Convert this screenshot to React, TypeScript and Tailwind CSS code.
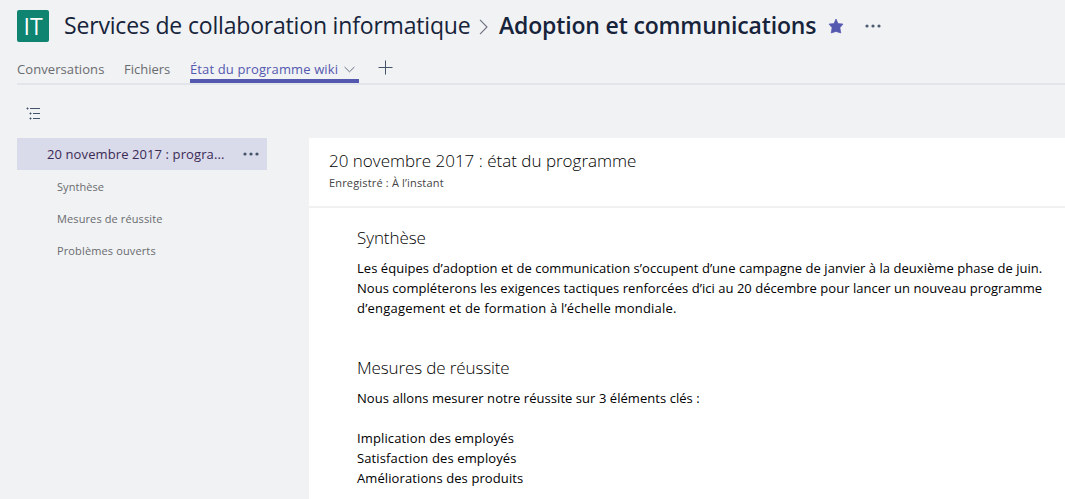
import React from "react";

const sections = [
  { label: "Synthèse", cls: "ml-[40px] tracking-[0.05px]" },
  { label: "Mesures de réussite", cls: "ml-[40px] tracking-[0.11px]" },
  { label: "Problèmes ouverts", cls: "ml-[40px] tracking-[0.13px]" },
];

function Dots({ className }: { className: string }) {
  return (
    <svg width="16" height="4" viewBox="0 0 16 4" className={className} fill="currentColor">
      <circle cx="2" cy="2" r="1.6" />
      <circle cx="8" cy="2" r="1.6" />
      <circle cx="14" cy="2" r="1.6" />
    </svg>
  );
}

function Header() {
  return (
    <header className="flex h-[42px] items-start whitespace-nowrap pl-[17px] pt-[10px] text-[23px] leading-8 text-[#16233a]">
      <div className="flex size-8 items-center justify-center rounded-[2px] bg-[#0f8470] text-white">
        <span className="text-[23px] leading-8">IT</span>
      </div>
      <span className="-mt-px ml-[15px] w-[407px] tracking-[-0.18px]">Services de collaboration informatique</span>
      <svg width="9" height="16" viewBox="0 0 9 16" className="ml-[8px] mt-[9px] text-[#6b7080]" fill="none" stroke="currentColor" strokeWidth="1.1">
        <path d="M1 0.8L8 8L1 15.2" />
      </svg>
      <h1 className="-mt-px ml-[11px] w-[318px] font-semibold tracking-[-0.16px]">Adoption et communications</h1>
      <svg width="16" height="16" viewBox="0 0 16 16" className="ml-[11px] mt-[8px] text-[#5558af]" fill="currentColor">
        <path d="M8 1L10 5.6L15 6.1L11.9 9.7L12.8 15L8 13.4L3.2 15L4.1 9.7L1 6.1L6 5.6Z" stroke="currentColor" strokeWidth="0.7" strokeLinejoin="round" />
      </svg>
      <Dots className="ml-[21px] mt-[14px] text-[#4f5b70]" />
    </header>
  );
}

function Tabs() {
  return (
    <nav className="ml-[17px] flex h-[43px] items-start whitespace-nowrap border-b-2 border-[#e2e5e9] pt-[17px] text-[13px] leading-5 text-[#6a6b6f]">
      <span className="w-[107px] tracking-[0.08px]">Conversations</span>
      <span className="w-[66px] tracking-[0px]">Fichiers</span>
      <span className="flex h-6 w-[169px] border-b-4 border-[#5558af] text-[#5558af]">
        <span className="w-[154px] tracking-[0.13px]">État du programme wiki</span>
        <svg width="11" height="7" viewBox="0 0 11 7" className="mt-[7px] text-[#6a6f80]" fill="none" stroke="currentColor" strokeWidth="1">
          <path d="M0.6 1L5.5 5.8L10.4 1" />
        </svg>
      </span>
      <svg width="15" height="15" viewBox="0 0 15 15" className="ml-[19px] mt-px text-[#45536a]" fill="none" stroke="currentColor" strokeWidth="1">
        <path d="M0.5 7.5H14.5M7.5 0.5V14.5" />
      </svg>
    </nav>
  );
}

function Sidebar() {
  return (
    <aside className="ml-[17px] w-[250px] shrink-0">
      <svg width="15" height="13" viewBox="0 0 15 13" className="ml-[9px] mt-[22px] text-[#45536a]" fill="none" stroke="currentColor" strokeWidth="1">
        <path d="M4 1.5H14M7 6.5H14M7 11.5H14" />
        <path d="M0.5 1.5H2.5M1.5 0.5V2.5M3.5 6.5H5.5M4.5 5.5V7.5M3.5 11.5H5.5M4.5 10.5V12.5" />
      </svg>
      <div className="mt-[18px] flex h-8 items-center bg-[#d9daea] text-[13px] text-[#3b2b55]">
        <span className="ml-[30px] w-[196px] leading-5 tracking-[0.1px]">20 novembre 2017 : progra...</span>
        <Dots className="text-[#45536a]" />
      </div>
      <ul className="pt-px text-[11px] text-[#6a6b6f]">
        {sections.map((s) => (
          <li key={s.label} className="flex h-8 items-center">
            <span className={s.cls}>{s.label}</span>
          </li>
        ))}
      </ul>
    </aside>
  );
}

function Article() {
  return (
    <main className="ml-[42px] mt-[53px] h-[361px] flex-1 overflow-hidden bg-white text-[13px] leading-5 text-black">
      <div className="h-[70px] border-b-2 border-[#f1f1f2] pl-5 pt-[11px]">
        <h2 className="text-[17px] font-light leading-6 tracking-[0px]">20 novembre 2017 : état du programme</h2>
        <p className="mt-[2px] text-[11px] leading-4 tracking-[0.17px] text-[#444]">Enregistré : À l’instant</p>
      </div>
      <div className="pl-12 pt-[18px]">
        <h3 className="text-[17px] font-light leading-6 tracking-[-0.08px]">Synthèse</h3>
        <div className="mt-2">
          <p className="tracking-[0.037px]">Les équipes d’adoption et de communication s’occupent d’une campagne de janvier à la deuxième phase de juin.</p>
          <p className="tracking-[0.038px]">Nous compléterons les exigences tactiques renforcées d’ici au 20 décembre pour lancer un nouveau programme</p>
          <p className="tracking-[0.2px]">d’engagement et de formation à l’échelle mondiale.</p>
        </div>
        <h3 className="mt-[38px] text-[17px] font-light leading-6 tracking-[-0.12px]">Mesures de réussite</h3>
        <p className="mt-2 tracking-[0.05px]">Nous allons mesurer notre réussite sur 3 éléments clés :</p>
        <div className="mt-5">
          <p className="tracking-[0.13px]">Implication des employés</p>
          <p className="tracking-[0.12px]">Satisfaction des employés</p>
          <p className="tracking-[0.1px]">Améliorations des produits</p>
        </div>
      </div>
    </main>
  );
}

export default function App() {
  return (
    <div className="h-[499px] w-[1065px] overflow-hidden bg-[#f0f2f4] font-['Open_Sans',sans-serif]">
      <Header />
      <Tabs />
      <div className="flex items-start whitespace-nowrap">
        <Sidebar />
        <Article />
      </div>
    </div>
  );
}
